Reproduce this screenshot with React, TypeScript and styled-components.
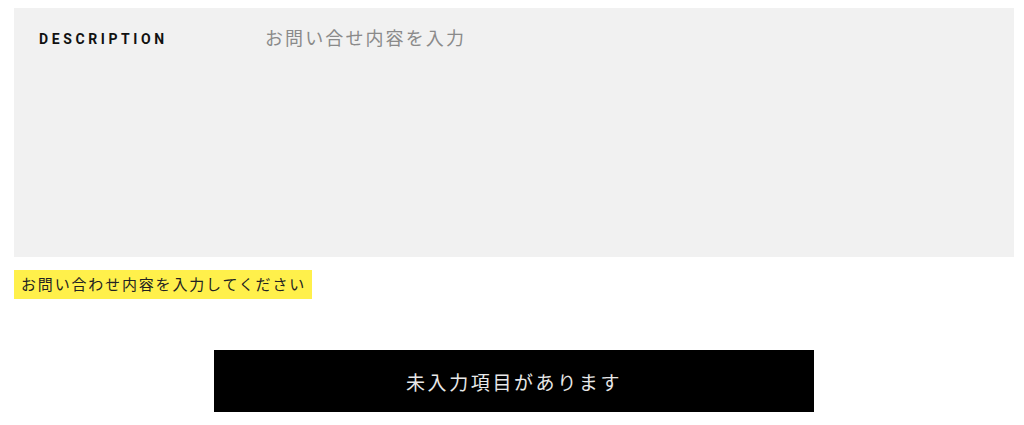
import styled, { createGlobalStyle } from "styled-components";

const GlobalStyle = createGlobalStyle`
    body {
        margin: 0;
        background: #fff;
        font-family: "Noto Sans CJK JP", "Noto Sans", sans-serif;
    }
`;

const Page = styled.div`
    padding: 8px 10px 0 14px;
`;

const Field = styled.div`
    display: flex;
    background-color: #f1f1f1;
    height: 249px;
    padding: 16px 20px 0 25px;
    box-sizing: border-box;
`;

const Label = styled.label`
    width: 226px;
    flex: none;
    font-family: Roboto, "Liberation Sans", sans-serif;
    font-weight: 700;
    font-size: 14px;
    letter-spacing: 3.6px;
    color: #111;
    padding-top: 7px;
`;

const TextArea = styled.textarea`
    flex: 1;
    height: 200px;
    border: none;
    outline: none;
    resize: none;
    padding: 0;
    background: transparent;
    font-family: "Noto Sans CJK JP", sans-serif;
    font-size: 18px;
    letter-spacing: 2.1px;
    color: #333;

    &::placeholder {
        color: #8a8a8a;
    }
`;

const ErrorNote = styled.p`
    display: inline-block;
    margin: 13px 0 0;
    padding: 3px 6px 4px 7px;
    background-color: #fff04b;
    font-size: 15px;
    letter-spacing: 1.82px;
    line-height: 22px;
    color: #222;
`;

const Actions = styled.div`
    display: flex;
    justify-content: center;
    margin-top: 51px;
`;

const SubmitButton = styled.button`
    width: 600px;
    height: 62px;
    border: none;
    background: #000;
    color: #e8e8e8;
    font-family: "Noto Sans CJK JP", sans-serif;
    font-size: 19px;
    letter-spacing: 2.6px;
    cursor: not-allowed;
`;

const App: React.FC = () => {
    return (
        <>
            <GlobalStyle />
            <Page>
                <Field>
                    <Label htmlFor="description">DESCRIPTION</Label>
                    <TextArea id="description" placeholder="お問い合せ内容を入力" />
                </Field>
                <ErrorNote>お問い合わせ内容を入力してください</ErrorNote>
                <Actions>
                    <SubmitButton type="button">未入力項目があります</SubmitButton>
                </Actions>
            </Page>
        </>
    );
};

export default App;
